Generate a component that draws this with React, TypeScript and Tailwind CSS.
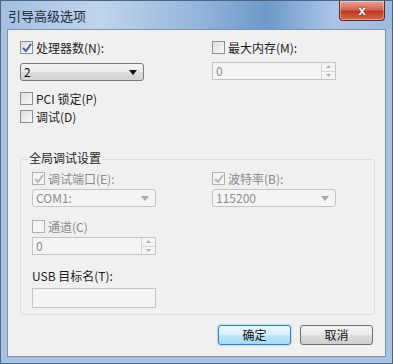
import React from "react";

const font = "font-['SimSun','Noto_Sans_CJK_SC',sans-serif]";

const Check = ({ checked, disabled }: { checked?: boolean; disabled?: boolean }) => (
  <span
    className={`w-[13px] h-[13px] shrink-0 flex items-center justify-center border ${
      disabled ? "border-[#b1b1b1] bg-[#f4f4f4]" : "border-[#8e8f8f] bg-[linear-gradient(135deg,#dcdcdc,#fafafa)]"
    }`}
  >
    {checked && (
      <svg width="10" height="10" viewBox="0 0 10 10">
        <path d="M1 5 L4 8 L9 1" fill="none" stroke={disabled ? "#b8b8b8" : "#4b5f99"} strokeWidth="2" />
      </svg>
    )}
  </span>
);

const CheckRow = ({ label, checked, disabled }: { label: string; checked?: boolean; disabled?: boolean }) => (
  <div className="flex items-center gap-[3px] h-[13px]">
    <Check checked={checked} disabled={disabled} />
    <span className={`text-[12px] leading-none whitespace-pre ${disabled ? "text-[#8a8a8a]" : "text-[#1e1e1e]"}`}>
      {label}
    </span>
  </div>
);

const Combo = ({ value, disabled }: { value: string; disabled?: boolean }) => (
  <div
    className={`w-[124px] h-[18px] rounded-[3px] border flex items-center justify-between pl-[3px] pr-[6px] ${
      disabled
        ? "border-[#c1c4c8] bg-[#f4f4f4] text-[#8d8d8d]"
        : "border-[#7a7a7a] bg-[linear-gradient(#f3f3f3,#ebebeb_50%,#dddddd_51%,#d2d2d2)] text-[#111]"
    }`}
  >
    <span className="text-[12px] leading-none">{value}</span>
    <svg width="8" height="5" viewBox="0 0 8 5">
      <path d="M0 0 H8 L4 5 Z" fill={disabled ? "#a8a8a8" : "#111"} />
    </svg>
  </div>
);

const Spin = ({ value }: { value: string }) => (
  <div className="w-[124px] h-[18px] border border-[#c2c4c8] bg-[#f4f4f4] flex items-stretch justify-between">
    <span className="text-[12px] leading-none text-[#8d8d8d] pl-[3px] self-center">{value}</span>
    <div className="w-[14px] flex flex-col border-l border-[#d4d6d9]">
      <div className="flex-1 flex items-center justify-center border-b border-[#d4d6d9]">
        <svg width="5" height="3" viewBox="0 0 5 3"><path d="M0 3 L2.5 0 L5 3 Z" fill="#b0b0b0" /></svg>
      </div>
      <div className="flex-1 flex items-center justify-center">
        <svg width="5" height="3" viewBox="0 0 5 3"><path d="M0 0 L2.5 3 L5 0 Z" fill="#b0b0b0" /></svg>
      </div>
    </div>
  </div>
);

export default function App() {
  return (
    <div className={`w-[393px] h-[364px] flex flex-col border border-[#4d6585] bg-[#a8c2e2] ${font} overflow-hidden`}>
      {/* title bar */}
      <div className="h-[28px] shrink-0 flex items-start justify-between pl-[7px] bg-[linear-gradient(90deg,#a3bfe0_0%,#c0d5ec_25%,#95b6dc_50%,#6e99ca_68%,#aac5e5_85%,#9dbbdf_100%)]">
        <span className="text-[13px] leading-none mt-[8px] text-[#1f2b3a]">引导高级选项</span>
        <div className="mr-[7px] w-[46px] h-[20px] rounded-b-[4px] border border-t-0 border-[#6e2320] bg-[linear-gradient(#e9a497,#d5664f_45%,#c23a20_55%,#d06a4f)] flex items-center justify-center shadow-[inset_0_0_0_1px_rgba(255,255,255,0.35)]">
          <span className="text-white text-[13px] font-bold leading-none font-['Liberation_Sans',sans-serif] [text-shadow:0_0_2px_#5a1a10]">x</span>
        </div>
      </div>

      {/* client area */}
      <div className="ml-[6px] w-[379px] h-[328px] border border-[#7e93ad] bg-[#f0f0f0] flex flex-col pl-[12px] pt-[11px]">
        <div className="flex">
          <div className="w-[192px] flex flex-col">
            <CheckRow label="处理器数(N):" checked />
            <div className="mt-[9px]">
              <Combo value="2" />
            </div>
          </div>
          <div className="flex flex-col">
            <CheckRow label="最大内存(M):" />
            <div className="mt-[8px]">
              <Spin value="0" />
            </div>
          </div>
        </div>

        <div className="mt-[11px] flex flex-col gap-[5px]">
          <CheckRow label="PCI 锁定(P)" />
          <CheckRow label="调试(D)" />
        </div>

        {/* group box */}
        <div className="mt-[36px] w-[355px] h-[156px] border border-[#d5dfe5] rounded-[3px] relative flex flex-col pl-[11px] pt-[12px]">
          <span className="absolute left-[7px] -top-[8px] px-[1px] bg-[#f0f0f0] text-[12px] leading-none text-[#1e1e1e]">全局调试设置</span>
          <div className="flex">
            <div className="w-[180px] flex flex-col">
              <CheckRow label="调试端口(E):" checked disabled />
              <div className="mt-[4px]">
                <Combo value="COM1:" disabled />
              </div>
            </div>
            <div className="flex flex-col">
              <CheckRow label="波特率(B):" checked disabled />
              <div className="mt-[4px]">
                <Combo value="115200" disabled />
              </div>
            </div>
          </div>
          <div className="mt-[13px]">
            <CheckRow label="通道(C)" disabled />
          </div>
          <div className="mt-[4px]">
            <Spin value="0" />
          </div>
          <span className="mt-[15px] text-[12px] leading-none text-[#1e1e1e]">USB 目标名(T):</span>
          <div className="mt-[6px] w-[124px] h-[20px] border border-[#c2c4c8] bg-[#f4f4f4]" />
        </div>

        {/* buttons */}
        <div className="mt-[10px] flex gap-[9px] pl-[198px]">
          <div className="w-[73px] h-[20px] rounded-[3px] border border-[#3c7fb1] bg-[linear-gradient(#eaf6fd,#d9f0fc_50%,#bee6fd_51%,#a7d9f5)] shadow-[0_0_2px_#55a7e6] flex items-center justify-center">
            <span className="text-[12px] leading-none text-[#111]">确定</span>
          </div>
          <div className="w-[73px] h-[20px] rounded-[3px] border border-[#707070] bg-[linear-gradient(#f2f2f2,#ebebeb_50%,#dddddd_51%,#cfcfcf)] flex items-center justify-center">
            <span className="text-[12px] leading-none text-[#111]">取消</span>
          </div>
        </div>
      </div>
    </div>
  );
}
